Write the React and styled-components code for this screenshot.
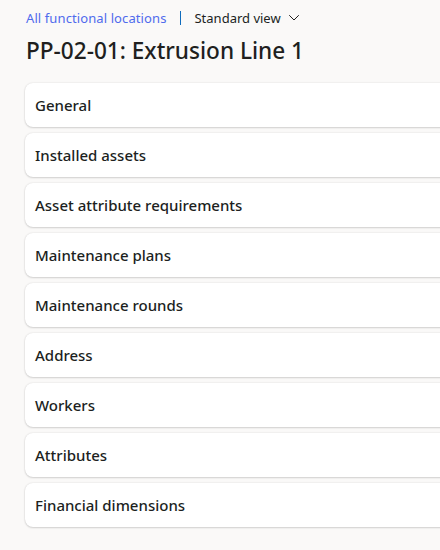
import React from 'react';
import styled, { createGlobalStyle } from 'styled-components';

const GlobalStyle = createGlobalStyle`
  html, body {
    margin: 0;
    padding: 0;
    background: #faf9f8;
    font-family: "Segoe UI", "Noto Sans", "Open Sans", sans-serif;
    color: #201f1e;
    overflow: hidden;
  }
`;

const Page = styled.div`
  width: 440px;
  height: 550px;
  overflow: hidden;
  padding: 7px 0 0 25px;
  box-sizing: border-box;
`;

const Breadcrumb = styled.div`
  display: flex;
  align-items: center;
  height: 22px;
  font-size: 13px;
`;

const CrumbLink = styled.a`
  color: #4f6bed;
  text-decoration: none;
  margin-left: 1px;
  letter-spacing: 0.1px;
`;

const Divider = styled.span`
  width: 1px;
  height: 14px;
  background: #0f6cbd;
  margin: 0 12px 0 14px;
`;

const ViewPicker = styled.span`
  display: flex;
  align-items: center;
  gap: 7px;
  color: #201f1e;
  margin-left: 1px;
`;

const Title = styled.h1`
  margin: 7px 0 0 1px;
  font-size: 22.6px;
  font-weight: 500;
  line-height: 30px;
`;

const Sections = styled.div`
  display: flex;
  flex-direction: column;
  gap: 6px;
  margin-top: 17px;
  margin-right: -30px;
`;

const Card = styled.div`
  height: 44px;
  display: flex;
  align-items: center;
  padding-left: 10px;
  background: #ffffff;
  border-radius: 8px;
  box-shadow: 0 1px 2px rgba(0, 0, 0, 0.14), 0 0 2px rgba(0, 0, 0, 0.12);
  font-size: 15px;
  font-weight: 500;
`;

const sections = [
  'General',
  'Installed assets',
  'Asset attribute requirements',
  'Maintenance plans',
  'Maintenance rounds',
  'Address',
  'Workers',
  'Attributes',
  'Financial dimensions',
];

export default function App() {
  return (
    <Page>
      <GlobalStyle />
      <Breadcrumb>
        <CrumbLink href="#">All functional locations</CrumbLink>
        <Divider />
        <ViewPicker>
          Standard view
          <svg width="12" height="12" viewBox="0 0 12 12" fill="none">
            <path d="M1.5 3.5l4.5 4.5 4.5-4.5" stroke="#201f1e" strokeWidth="1" strokeLinecap="round" strokeLinejoin="round" />
          </svg>
        </ViewPicker>
      </Breadcrumb>
      <Title>PP-02-01: Extrusion Line 1</Title>
      <Sections>
        {sections.map((s) => (
          <Card key={s}>{s}</Card>
        ))}
      </Sections>
    </Page>
  );
}
